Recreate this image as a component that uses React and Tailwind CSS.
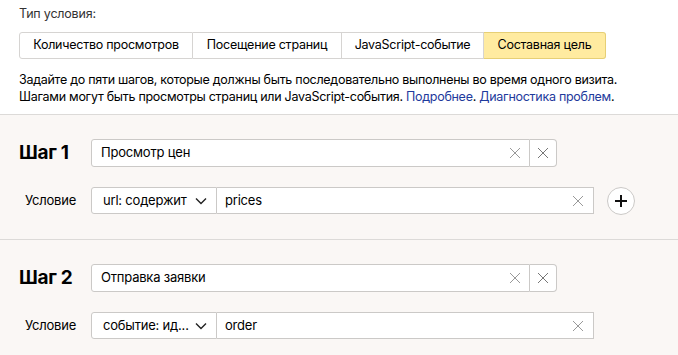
import React from "react";

const Cross = ({ size = 12, color = "#999", sw = 1 }) => (
  <svg width={size} height={size} viewBox="0 0 12 12" fill="none">
    <path d="M1 1L11 11M11 1L1 11" stroke={color} strokeWidth={sw} />
  </svg>
);

const Chevron = () => (
  <svg width="12" height="8" viewBox="0 0 12 8" fill="none">
    <path d="M1 1.5L6 6.5L11 1.5" stroke="#222" strokeWidth="1.4" />
  </svg>
);

function Step({ n, name, selectLabel, value, plus }) {
  return (
    <div className="border-t border-[#dcdad8] bg-[#faf7f5] pt-[24px] pb-[25px]">
      <div className="flex items-center h-[28px]">
        <div className="w-[72px] pl-[19px] text-[19px] font-bold text-black tracking-[-0.3px] whitespace-nowrap">
          Шаг {n}
        </div>
        <div className="ml-[19px] flex h-[28px]">
          <div className="w-[439px] h-full bg-white border border-[#cbc9c7] rounded-l-[3px] flex items-center pl-[9px] pr-[8px]">
            <span className="flex-1 text-[13px] text-black tracking-[-0.2px]">{name}</span>
            <Cross />
          </div>
          <div className="w-[27px] h-full bg-white border border-l-0 border-[#cbc9c7] rounded-r-[4px] flex items-center justify-center">
            <Cross color="#777" />
          </div>
        </div>
      </div>
      <div className="flex items-center h-[27px] mt-[20px]">
        <div className="w-[91px] pl-[25px] text-[13px] text-black tracking-[-0.2px]">Условие</div>
        <div className="flex h-full">
          <div className="w-[126px] h-full bg-white border border-[#cbc9c7] rounded-l-[3px] flex items-center pl-[11px] pr-[9px]">
            <span className="flex-1 text-[13px] text-black whitespace-nowrap tracking-[-0.2px]">{selectLabel}</span>
            <Chevron />
          </div>
          <div className="w-[377px] h-full bg-white border border-l-0 border-[#cbc9c7] flex items-center pl-[8px] pr-[9px]">
            <span className="flex-1 text-[13px] text-black tracking-[-0.2px]">{value}</span>
            <Cross />
          </div>
        </div>
        {plus && (
          <div className="ml-[13px] w-[28px] h-[28px] rounded-full border border-[#cbc9c7] bg-white flex items-center justify-center">
            <svg width="14" height="14" viewBox="0 0 14 14">
              <path d="M7 1V13M1 7H13" stroke="#111" strokeWidth="2" />
            </svg>
          </div>
        )}
      </div>
    </div>
  );
}

export default function App() {
  const tabs = [
    { t: "Количество просмотров", w: 174 },
    { t: "Посещение страниц", w: 149 },
    { t: "JavaScript-событие", w: 142 },
    { t: "Составная цель", w: 122, active: true },
  ];
  return (
    <div
      className="w-[678px] h-[355px] overflow-hidden bg-white text-black"
      style={{ fontFamily: "Inter, 'Noto Sans', sans-serif" }}
    >
      <div className="pt-[5px] pl-[19px] text-[12.5px] text-[#333] leading-[17px] tracking-[-0.2px]">Тип условия:</div>
      <div className="ml-[19px] mt-[10px] flex h-[27px]">
        {tabs.map((tab, i) => (
          <div
            key={i}
            style={{ width: tab.w }}
            className={
              "h-full flex items-center justify-center text-[12.5px] tracking-[-0.25px] border " +
              (i > 0 ? "border-l-0 " : "rounded-l-[3px] ") +
              (tab.active
                ? "bg-[#ffeba0] border-[#e6cf75] rounded-r-[3px]"
                : "bg-white border-[#d6d4d2]")
            }
          >
            {tab.t}
          </div>
        ))}
      </div>
      <div className="pl-[19px] mt-[12px] text-[12.5px] leading-[17px] text-black tracking-[-0.28px]">
        <div>Задайте до пяти шагов, которые должны быть последовательно выполнены во время одного визита.</div>
        <div>
          Шагами могут быть просмотры страниц или JavaScript-события.{" "}
          <span className="text-[#1e3a9c]">Подробнее</span>.{" "}
          <span className="text-[#1e3a9c]">Диагностика проблем</span>.
        </div>
      </div>
      <div className="mt-[9px]">
        <Step n={1} name="Просмотр цен" selectLabel="url: содержит" value="prices" plus />
        <Step n={2} name="Отправка заявки" selectLabel="событие: ид..." value="order" />
      </div>
    </div>
  );
}
